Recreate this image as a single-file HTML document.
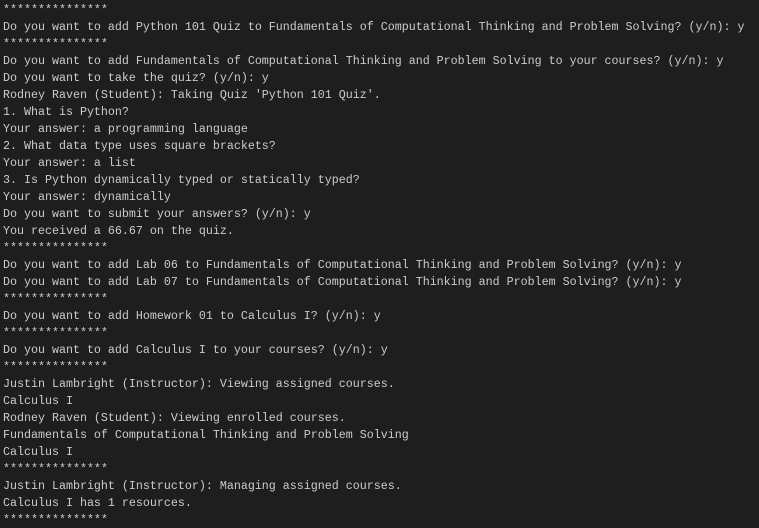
<!DOCTYPE html>
<html><head><meta charset="utf-8"><style>
html,body{margin:0;padding:0;background:#1e1e1e;width:759px;height:528px;overflow:hidden}
pre{margin:0;padding:2px 0 0 3px;font-family:"Liberation Mono",monospace;font-size:11.67px;line-height:17px;color:#cccccc;white-space:pre}
</style></head><body><pre>***************
Do you want to add Python 101 Quiz to Fundamentals of Computational Thinking and Problem Solving? (y/n): y
***************
Do you want to add Fundamentals of Computational Thinking and Problem Solving to your courses? (y/n): y
Do you want to take the quiz? (y/n): y
Rodney Raven (Student): Taking Quiz 'Python 101 Quiz'.
1. What is Python?
Your answer: a programming language
2. What data type uses square brackets?
Your answer: a list
3. Is Python dynamically typed or statically typed?
Your answer: dynamically
Do you want to submit your answers? (y/n): y
You received a 66.67 on the quiz.
***************
Do you want to add Lab 06 to Fundamentals of Computational Thinking and Problem Solving? (y/n): y
Do you want to add Lab 07 to Fundamentals of Computational Thinking and Problem Solving? (y/n): y
***************
Do you want to add Homework 01 to Calculus I? (y/n): y
***************
Do you want to add Calculus I to your courses? (y/n): y
***************
Justin Lambright (Instructor): Viewing assigned courses.
Calculus I
Rodney Raven (Student): Viewing enrolled courses.
Fundamentals of Computational Thinking and Problem Solving
Calculus I
***************
Justin Lambright (Instructor): Managing assigned courses.
Calculus I has 1 resources.
***************</pre></body></html>
